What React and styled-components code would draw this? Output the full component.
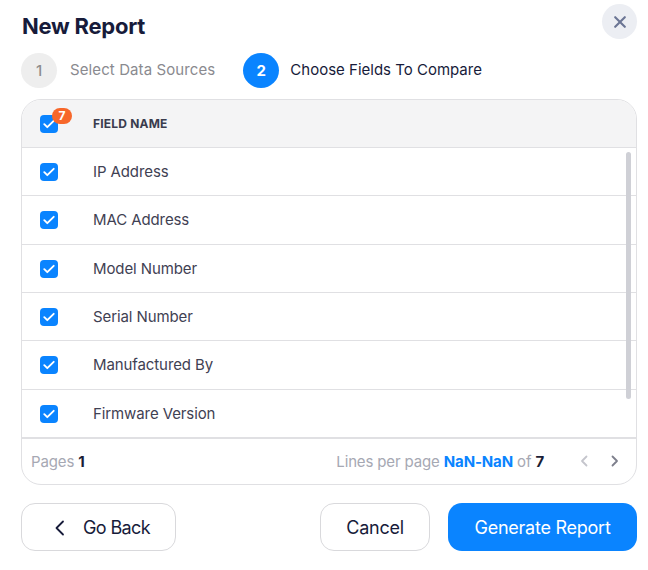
import React from 'react';
import styled, { createGlobalStyle } from 'styled-components';

const GlobalStyle = createGlobalStyle`
  html, body {
    margin: 0;
    padding: 0;
    background: #fff;
    font-family: Inter, "Noto Sans", sans-serif;
  }
  * {
    box-sizing: border-box;
  }
`;

const Modal = styled.div`
  width: 648px;
  height: 570px;
  padding: 4px 11px 0 21px;
  display: flex;
  flex-direction: column;
`;

const Header = styled.div`
  display: flex;
  justify-content: space-between;
  align-items: flex-start;
  height: 35px;
`;

const Title = styled.h1`
  margin: 7px 0 0 1px;
  font-size: 22px;
  line-height: 30px;
  font-weight: 700;
  letter-spacing: -0.25px;
  color: #171b3a;
`;

const CloseButton = styled.button`
  width: 35px;
  height: 35px;
  border: none;
  border-radius: 50%;
  background: #eceef3;
  color: #6b7594;
  display: flex;
  align-items: center;
  justify-content: center;
  padding: 0;
`;

const Stepper = styled.div`
  display: flex;
  align-items: center;
  margin-top: 14px;
  height: 35px;
`;

const StepNumber = styled.div`
  width: 36px;
  height: 35px;
  border-radius: 50%;
  display: flex;
  align-items: center;
  justify-content: center;
  font-size: 15px;
  font-weight: ${p => (p.$active ? 700 : 500)};
  background: ${p => (p.$active ? '#0a84ff' : '#eeeeee')};
  color: ${p => (p.$active ? '#fff' : '#8d8d8d')};
`;

const StepLabel = styled.span`
  font-size: 15px;
  line-height: 34px;
  height: 35px;
  letter-spacing: ${p => (p.$active ? '0' : '0.1px')};
  margin-left: ${p => (p.$active ? '11px' : '13px')};
  margin-right: ${p => (p.$active ? '0' : '28px')};
  color: ${p => (p.$active ? '#171b3a' : '#8a8a8f')};
`;

const Card = styled.div`
  position: relative;
  margin-top: 11px;
  height: 386px;
  border: 1px solid #e0e0e3;
  border-radius: 20px;
  overflow: hidden;
  display: flex;
  flex-direction: column;
`;

const HeadRow = styled.div`
  height: 48px;
  flex: none;
  display: flex;
  align-items: center;
  padding-left: 18px;
  background: #f4f4f5;
  border-bottom: 1px solid #e0e0e3;
`;

const HeadLabel = styled.span`
  margin-left: 35px;
  font-size: 12px;
  font-weight: 700;
  letter-spacing: 0.2px;
  color: #3a3c4e;
`;

const Rows = styled.div`
  flex: 1;
  display: grid;
  grid-auto-rows: 1fr;
`;

const Row = styled.div`
  display: flex;
  align-items: center;
  padding: 1px 0 0 18px;
  border-bottom: 1px solid #e0e0e3;
`;

const RowLabel = styled.span`
  margin: 0 0 1px 35px;
  font-size: 15px;
  letter-spacing: -0.1px;
  color: #3f4153;
`;

const CheckBox = styled.span`
  position: relative;
  width: 18px;
  height: 18px;
  border-radius: 4px;
  background: #0a84ff;
  display: flex;
  align-items: center;
  justify-content: center;
  flex: none;
`;

const CountBadge = styled.span`
  position: absolute;
  top: -7px;
  left: 12px;
  width: 20px;
  height: 16px;
  border-radius: 8px;
  background: #f7672a;
  color: #fff;
  font-size: 12px;
  font-weight: 700;
  display: flex;
  align-items: center;
  justify-content: center;
`;

const ScrollThumb = styled.div`
  position: absolute;
  top: 52px;
  right: 5px;
  width: 5px;
  height: 247px;
  border-radius: 3px;
  background: #cfd0d6;
`;

const Footer = styled.div`
  height: 46px;
  flex: none;
  display: flex;
  align-items: center;
  justify-content: space-between;
  padding: 0 16px 1px 9px;
  border-top: 1px solid #e0e0e3;
  font-size: 15px;
  letter-spacing: -0.14px;
  color: #a6a8b3;
`;

const Strong = styled.b`
  font-weight: 700;
  color: ${p => (p.$blue ? '#0a84ff' : '#1b1d36')};
`;

const FooterRight = styled.div`
  display: flex;
  align-items: center;
`;

const PageArrows = styled.div`
  display: flex;
  align-items: center;
  gap: 21px;
  margin-left: 35px;
`;

const Actions = styled.div`
  display: flex;
  align-items: center;
  margin-top: 18px;
`;

const Button = styled.button`
  height: 48px;
  border-radius: 14px;
  font-family: inherit;
  font-size: 18px;
  letter-spacing: ${p => (p.$back ? '-0.6px' : '-0.25px')};
  font-weight: 400;
  display: flex;
  align-items: center;
  justify-content: center;
  padding: 1px 0 0 ${p => (p.$back ? 8 : 0)}px;
  width: ${p => p.$width}px;
  margin-left: ${p => p.$gap || 0}px;
  border: ${p => (p.$primary ? 'none' : '1px solid #d9d9dc')};
  background: ${p => (p.$primary ? '#0a84ff' : '#fff')};
  color: ${p => (p.$primary ? '#fff' : '#171b3a')};
`;

const BackIcon = styled.svg`
  margin-right: 18px;
`;

const Check = () => (
  <svg width="12" height="10" viewBox="0 0 12 10" fill="none">
    <path d="M1.3 5.2 4.3 8.2 10.7 1.8" stroke="#fff" strokeWidth="1.9" strokeLinecap="round" strokeLinejoin="round" />
  </svg>
);

const Chevron = ({ left, color }) => (
  <svg width="10" height="12" viewBox="0 0 10 12" fill="none">
    <path
      d={left ? 'M7.5 1.5 3 6l4.5 4.5' : 'M2.5 1.5 7 6l-4.5 4.5'}
      stroke={color}
      strokeWidth="1.8"
      strokeLinecap="round"
      strokeLinejoin="round"
    />
  </svg>
);

const fields = [
  'IP Address',
  'MAC Address',
  'Model Number',
  'Serial Number',
  'Manufactured By',
  'Firmware Version',
];

const App = () => (
  <Modal>
    <GlobalStyle />
    <Header>
      <Title>New Report</Title>
      <CloseButton aria-label="Close">
        <svg width="12" height="12" viewBox="0 0 12 12" fill="none">
          <path d="M1.2 1.2l9.6 9.6M10.8 1.2l-9.6 9.6" stroke="currentColor" strokeWidth="2.1" strokeLinecap="round" />
        </svg>
      </CloseButton>
    </Header>

    <Stepper>
      <StepNumber>1</StepNumber>
      <StepLabel>Select Data Sources</StepLabel>
      <StepNumber $active>2</StepNumber>
      <StepLabel $active>Choose Fields To Compare</StepLabel>
    </Stepper>

    <Card>
      <HeadRow>
        <CheckBox>
          <Check />
          <CountBadge>7</CountBadge>
        </CheckBox>
        <HeadLabel>FIELD NAME</HeadLabel>
      </HeadRow>
      <Rows>
        {fields.map(field => (
          <Row key={field}>
            <CheckBox>
              <Check />
            </CheckBox>
            <RowLabel>{field}</RowLabel>
          </Row>
        ))}
      </Rows>
      <ScrollThumb />
      <Footer>
        <span>
          Pages <Strong>1</Strong>
        </span>
        <FooterRight>
          <span>
            Lines per page <Strong $blue>NaN-NaN</Strong> of <Strong>7</Strong>
          </span>
          <PageArrows>
            <Chevron left color="#c4c5cc" />
            <Chevron color="#7d7f8c" />
          </PageArrows>
        </FooterRight>
      </Footer>
    </Card>

    <Actions>
      <Button $width={155} $back>
        <BackIcon width="10" height="16" viewBox="0 0 10 16" fill="none">
          <path d="M8 1.5 1.5 8 8 14.5" stroke="#171b3a" strokeWidth="1.8" strokeLinecap="round" strokeLinejoin="round" />
        </BackIcon>
        Go Back
      </Button>
      <Button $width={110} $gap={144}>Cancel</Button>
      <Button $width={189} $gap={18} $primary>Generate Report</Button>
    </Actions>
  </Modal>
);

export default App;
